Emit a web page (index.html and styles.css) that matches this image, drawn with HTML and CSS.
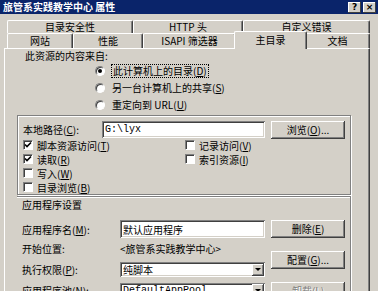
FILE: index.html
```html
<!DOCTYPE html>
<html lang="zh-CN">
<head>
  <meta charset="UTF-8">
  <title>旅管系实践教学中心 属性</title>
  <link rel="stylesheet" href="styles.css">
</head>
<body>
  <div class="titlebar">
    <span class="title">旅管系实践教学中心 属性</span>
    <span class="caps"><span class="cap">?</span><span class="cap">×</span></span>
  </div>
  <div class="sheet">
    <div class="tabrow row1">
      <div class="tab">目录安全性</div>
      <div class="tab">HTTP 头</div>
      <div class="tab">自定义错误</div>
    </div>
    <div class="tabrow row2">
      <div class="tab">网站</div>
      <div class="tab">性能</div>
      <div class="tab">ISAPI 筛选器</div>
      <div class="tab active">主目录</div>
      <div class="tab">文档</div>
    </div>
    <div class="panel">
      <div class="src-label">此资源的内容来自:</div>
      <div class="radios">
        <div class="radio-row"><span class="radio on"></span><span class="focus">此计算机上的目录(<u>D</u>)</span></div>
        <div class="radio-row"><span class="radio"></span><span>另一台计算机上的共享(<u>S</u>)</span></div>
        <div class="radio-row"><span class="radio"></span><span>重定向到 URL(<u>U</u>)</span></div>
      </div>

      <div class="group">
        <div class="path-row">
          <span class="path-lbl">本地路径(<u>C</u>):</span>
          <div class="field mono">G:\lyx</div>
          <div class="btn">浏览(<u>O</u>)...</div>
        </div>
        <div class="checks">
          <div class="check-row"><span class="box"><svg width="8" height="8" viewBox="0 0 8 8"><path d="M1 3.5 L3 5.5 L7 1.5" fill="none" stroke="#000" stroke-width="1.6"/></svg></span>脚本资源访问(<u>T</u>)</div>
          <div class="check-row"><span class="box"></span>记录访问(<u>V</u>)</div>
          <div class="check-row"><span class="box"><svg width="8" height="8" viewBox="0 0 8 8"><path d="M1 3.5 L3 5.5 L7 1.5" fill="none" stroke="#000" stroke-width="1.6"/></svg></span>读取(<u>R</u>)</div>
          <div class="check-row"><span class="box"></span>索引资源(<u>I</u>)</div>
          <div class="check-row"><span class="box"></span>写入(<u>W</u>)</div>
          <div class="check-row"></div>
          <div class="check-row"><span class="box"></span>目录浏览(<u>B</u>)</div>
        </div>
      </div>

      <div class="app">
        <div class="app-title">应用程序设置</div>
        <div class="app-body">
          <div class="app-grid">
            <span class="lbl">应用程序名(<u>M</u>):</span>
            <div class="field">默认应用程序</div>
            <span class="lbl">开始位置:</span>
            <span class="lbl">&lt;旅管系实践教学中心&gt;</span>
            <span class="lbl">执行权限(<u>P</u>):</span>
            <div class="field select">纯脚本<span class="arrow"></span></div>
            <span class="lbl">应用程序池(<u>N</u>):</span>
            <div class="field select mono">DefaultAppPool<span class="arrow"></span></div>
          </div>
          <div class="app-btns">
            <div class="btn">删除(<u>E</u>)</div>
            <div class="btn">配置(<u>G</u>)...</div>
            <div class="btn disabled">卸载(<u>L</u>)</div>
          </div>
        </div>
      </div>
    </div>
  </div>
</body>
</html>
```

FILE: styles.css
```css
* { box-sizing: border-box; }
body { margin: 0; width: 378px; height: 291px; overflow: hidden; background: #d4d0c8; font-family: "Noto Sans CJK SC", sans-serif; font-size: 10px; color: #000; }
u { text-decoration: underline; }

/* title bar */
.titlebar { height: 14px; background: #0a246a; color: #fff; display: flex; align-items: center; justify-content: space-between; padding: 0 2px 0 3px; }
.title { font-weight: bold; line-height: 14px; }
.caps { display: flex; gap: 2px; }
.cap { width: 13px; height: 11px; background: #d4d0c8; color: #000; box-shadow: inset -1px -1px #404040, inset 1px 1px #fff; font: bold 9px/11px "DejaVu Sans", sans-serif; text-align: center; }

/* tabs */
.sheet { padding: 6px 8px 0 4px; }
.tabrow { display: flex; margin-left: 3px; align-items: flex-start; }
.row1 { height: 13px; }
.row2 { height: 15px; }
.tab { height: 100%; border-top: 1px solid #fff; border-left: 1px solid #fff; border-right: 1px solid #404040; border-radius: 2px 2px 0 0; box-shadow: inset -1px 0 #808080; text-align: center; line-height: 12px; background: #d4d0c8; }
.row2 .tab { line-height: 14px; }
.row1 .tab:nth-child(1) { width: 126px; }
.row1 .tab:nth-child(2) { width: 110px; }
.row1 .tab:nth-child(3) { width: 127px; }
.row2 .tab:nth-child(1) { width: 66px; }
.row2 .tab:nth-child(2) { width: 70px; }
.row2 .tab:nth-child(3) { width: 93px; }
.row2 .tab:nth-child(4) { width: 69px; }
.row2 .tab:nth-child(5) { width: 65px; }
.row2 .tab.active { width: 73px; height: 18px; margin: -2px -2px 0 -2px; line-height: 16px; position: relative; z-index: 1; }

/* panel */
.panel { height: 260px; border-top: 1px solid #fff; border-left: 1px solid #fff; border-right: 1px solid #404040; box-shadow: inset -1px 0 #808080; padding: 1px 0 0 12px; }
.src-label { padding-left: 8px; line-height: 12px; }
.radios { padding-left: 78px; }
.radio-row { height: 17px; display: flex; align-items: center; }
.radio { width: 10px; height: 10px; border-radius: 50%; background: #fff; border: 1px solid; border-color: #808080 #fff #fff #808080; box-shadow: inset 1px 1px #404040; margin-right: 7px; display: flex; align-items: center; justify-content: center; }
.radio.on::after { content: ""; width: 4px; height: 4px; border-radius: 50%; background: #000; }
.focus { outline: 1px dotted #000; outline-offset: 0; padding: 0 1px; line-height: 12px; }

/* etched boxes */
.group { width: 334px; height: 80px; margin-top: 2px; border: 1px solid #808080; box-shadow: inset 1px 1px #fff, 1px 1px #fff; padding: 5px 0 0 5px; }
.path-row { display: flex; align-items: flex-start; height: 17px; }
.path-lbl { width: 79px; line-height: 17px; }
.field { height: 17px; background: #fff; box-shadow: inset 1px 1px #808080, inset -1px -1px #fff, inset 2px 2px #404040, inset -2px -2px #d4d0c8; padding: 0 3px; line-height: 17px; display: flex; align-items: center; }
.path-row .field { width: 163px; }
.mono { font-family: "Liberation Mono", "Noto Sans CJK SC", monospace; }
.btn { width: 74px; height: 18px; margin-left: 6px; background: #d4d0c8; box-shadow: inset -1px -1px #404040, inset 1px 1px #fff, inset -2px -2px #808080; text-align: center; line-height: 18px; }
.btn.disabled { color: #808080; text-shadow: 1px 1px #fff; }

.checks { display: grid; grid-template-columns: 162px 1fr; grid-auto-rows: 14px; }
.check-row { display: flex; align-items: center; }
.box { width: 10px; height: 10px; background: #fff; border: 1px solid; border-color: #808080 #fff #fff #808080; box-shadow: inset 1px 1px #404040; margin-right: 4px; display: flex; align-items: center; justify-content: center; }

.app { width: 334px; margin-top: 1px; border-top: 1px solid #808080; border-right: 1px solid #808080; box-shadow: inset 0 1px #fff, 1px 0 #fff; }
.app-title { padding-left: 5px; line-height: 14px; margin-top: 1px; margin-bottom: 8px; }
.app-body { display: flex; padding-left: 5px; }
.app-grid { display: grid; grid-template-columns: 98px 145px; grid-template-rows: 18px 21px 21px 20px; align-items: center; }
.app-grid .field { height: 18px; }
.app-grid .select { height: 15px; line-height: 15px; padding-right: 1px; }
.arrow { margin-left: auto; width: 12px; height: 12px; background: #d4d0c8; box-shadow: inset -1px -1px #404040, inset 1px 1px #fff, inset -2px -2px #808080; display: flex; align-items: center; justify-content: center; }
.arrow::after { content: ""; border-left: 3px solid transparent; border-right: 3px solid transparent; border-top: 3px solid #000; }
.app-btns { display: flex; flex-direction: column; gap: 13px; }
.app-btns .btn { height: 18px; }
```
